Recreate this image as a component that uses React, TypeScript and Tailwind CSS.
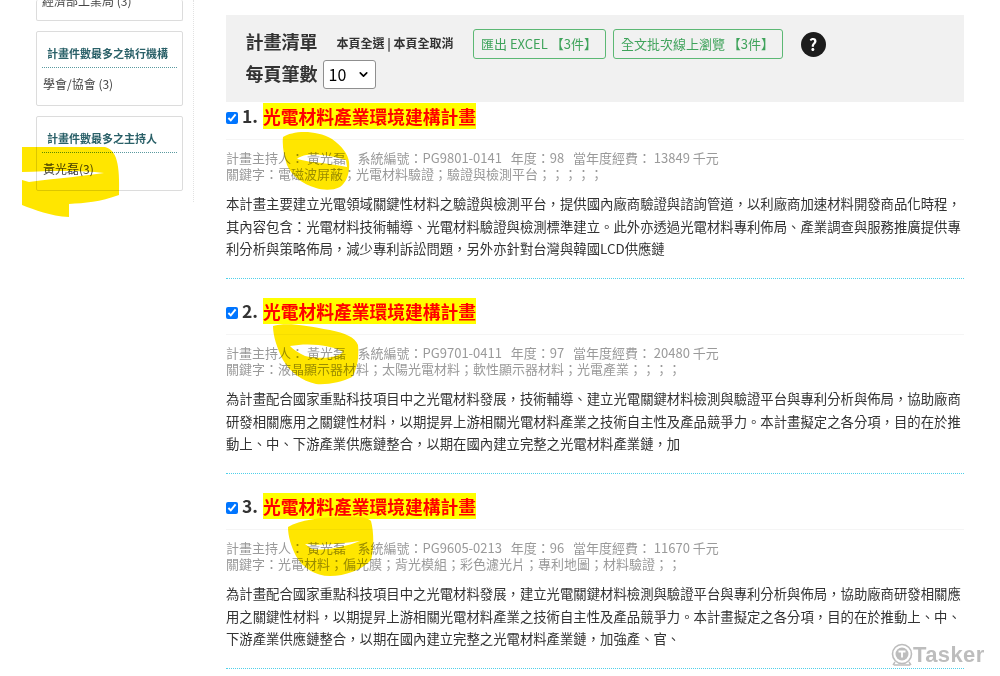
import { ChevronDown } from 'lucide-react';

const font = { fontFamily: '"Noto Sans CJK TC", "Noto Sans", sans-serif' };

interface Project {
  no: number;
  code: string;
  year: string;
  budget: string;
  keywords: string;
  lines: string[];
}

const projects: Project[] = [
  {
    no: 1,
    code: 'PG9801-0141',
    year: '98',
    budget: '13849',
    keywords: '電磁波屏蔽；光電材料驗證；驗證與檢測平台；；；；；',
    lines: [
      '本計畫主要建立光電領域關鍵性材料之驗證與檢測平台，提供國內廠商驗證與諮詢管道，以利廠商加速材料開發商品化時程，',
      '其內容包含：光電材料技術輔導、光電材料驗證與檢測標準建立。此外亦透過光電材料專利佈局、產業調查與服務推廣提供專',
      '利分析與策略佈局，減少專利訴訟問題，另外亦針對台灣與韓國LCD供應鏈',
    ],
  },
  {
    no: 2,
    code: 'PG9701-0411',
    year: '97',
    budget: '20480',
    keywords: '液晶顯示器材料；太陽光電材料；軟性顯示器材料；光電產業；；；；',
    lines: [
      '為計畫配合國家重點科技項目中之光電材料發展，技術輔導、建立光電關鍵材料檢測與驗證平台與專利分析與佈局，協助廠商',
      '研發相關應用之關鍵性材料，以期提昇上游相關光電材料產業之技術自主性及產品競爭力。本計畫擬定之各分項，目的在於推',
      '動上、中、下游產業供應鏈整合，以期在國內建立完整之光電材料產業鏈，加',
    ],
  },
  {
    no: 3,
    code: 'PG9605-0213',
    year: '96',
    budget: '11670',
    keywords: '光電材料；偏光膜；背光模組；彩色濾光片；專利地圖；材料驗證；；',
    lines: [
      '為計畫配合國家重點科技項目中之光電材料發展，建立光電關鍵材料檢測與驗證平台與專利分析與佈局，協助廠商研發相關應',
      '用之關鍵性材料，以期提昇上游相關光電材料產業之技術自主性及產品競爭力。本計畫擬定之各分項，目的在於推動上、中、',
      '下游產業供應鏈整合，以期在國內建立完整之光電材料產業鏈，加強產、官、',
    ],
  },
];

// highlighter marks: outer stroke then the hollow left inside it
const scribbles = [
  'M283 137 C292 131 315 129 332 139 C342 146 348 154 349 162 C350 172 347 182 340 187 C332 191 322 190 316 188 C302 184 292 176 287 165 C284 156 282 146 283 137 Z M297 159 C305 152 325 154 346 160 L347 167 C330 163 312 163 297 159 Z',
  'M273 326 C285 322 305 325 330 330 C345 333 355 337 358 345 C359 355 358 368 352 377 C342 382 328 385 316 384 C302 381 290 372 283 360 C277 348 273 336 273 326 Z M290 346 C310 342 335 346 343 352 C335 360 315 358 305 356 C298 353 293 349 290 346 Z',
  'M288 527 C300 520 320 517 345 517 C358 516 368 517 371 521 C374 532 374 550 371 560 C362 570 345 576 330 576 C315 576 303 568 296 556 C291 546 288 536 288 527 Z M305 544 C325 546 345 543 360 541 C345 547 325 551 312 549 Z',
];

function SideCard({ title, item, cut }: { title: string; item: string; cut?: boolean }) {
  return (
    <div className={`border border-[#dcdcdc] rounded-[2px] px-[5px] ${cut ? 'h-[21px] border-t-0 overflow-hidden' : 'h-[75px] pt-[13px]'}`}>
      {cut ? (
        <div className="text-[12px] leading-[16px] -mt-[7px] text-[#444]">{item}</div>
      ) : (
        <>
          <div className="text-[11px] leading-[16px] font-bold text-[#2a6068] pl-[5px] pb-[6px] border-b border-dotted border-[#5a9aa0]">{title}</div>
          <div className="text-[12px] leading-[16px] text-[#444] mt-[8px] pl-[1px]">{item}</div>
        </>
      )}
    </div>
  );
}

function ProjectItem({ p }: { p: Project }) {
  return (
    <div className="h-[177px] mb-[18px] border-b border-dotted border-[#4fd0ea]">
      <div className="h-[38px] flex items-start pt-[1px] border-b border-[#f5f5f5]">
        <input type="checkbox" defaultChecked className="mt-[9px] w-[12px] h-[12px] accent-[#0075ff]" readOnly />
        <span className="ml-[4px] text-[17.5px] leading-[26px] font-bold text-[#333]">{p.no}.</span>
        <span className="ml-[5px] bg-[#ffff00] text-[#ff0000] font-bold text-[17.75px] leading-[26px]">光電材料產業環境建構計畫</span>
      </div>
      <div className="mt-[10px] text-[13px] leading-[16px] text-[#9a9a9a]">
        <div className="whitespace-pre">{`計畫主持人： 黃光磊    系統編號：PG${p.code.slice(2)}   年度：${p.year}   當年度經費： ${p.budget} 千元`}</div>
        <div>關鍵字：{p.keywords}</div>
      </div>
      <div className="mt-[10px] text-[13.37px] leading-[22.5px] text-[#333]">
        {p.lines.map((l) => (
          <div key={l} className="whitespace-nowrap">{l}</div>
        ))}
      </div>
    </div>
  );
}

export default function App() {
  return (
    <div className="relative w-[1000px] h-[676px] overflow-hidden bg-white" style={font}>
      <div className="flex h-full">
        {/* Sidebar */}
        <aside className="w-[194px] h-[202px] pl-[36px] pr-[10px] border-r border-dotted border-[#e2e2e2] flex flex-col gap-[10px]">
          <SideCard cut title="" item="經濟部工業局 (3)" />
          <SideCard title="計畫件數最多之執行機構" item="學會/協會 (3)" />
          <SideCard title="計畫件數最多之主持人" item="黃光磊(3)" />
        </aside>

        {/* Main */}
        <main className="ml-[32px] w-[738px] pt-[15px]">
          <div className="h-[87px] bg-[#f1f1f1] pl-[19.5px] pt-[14px]">
            <div className="flex items-center h-[30px]">
              <span className="-mt-[6px] text-[18px] font-bold text-[#333]">計畫清單</span>
              <span className="-mt-[2px] ml-[19px] text-[12px] font-bold text-[#333]">本頁全選 | 本頁全取消</span>
              <button className="ml-[19px] w-[133px] h-[30px] border border-[#5cb874] rounded-[3px] text-[13px] text-[#3fa35b]">匯出 EXCEL 【3件】</button>
              <button className="ml-[7px] w-[170px] h-[30px] border border-[#5cb874] rounded-[3px] text-[13px] text-[#3fa35b]">全文批次線上瀏覽 【3件】</button>
              <span className="ml-[18px] w-[25px] h-[25px] rounded-full bg-[#1c1c1c] text-white text-[16px] font-bold flex items-center justify-center">?</span>
            </div>
            <div className="flex items-center h-[30px]">
              <span className="-mt-[2px] text-[18px] font-bold text-[#333]">每頁筆數</span>
              <span className="ml-[5px] w-[53px] h-[29px] bg-white border border-[#8f8f8f] rounded-[3px] flex items-center pl-[5px] text-[16px] text-black">
                10
                <ChevronDown className="ml-[11px] w-[13px] h-[13px]" strokeWidth={3} />
              </span>
            </div>
          </div>
          {projects.map((p) => (
            <ProjectItem key={p.no} p={p} />
          ))}
        </main>
      </div>

      {/* Highlighter scribbles over the page */}
      <svg className="absolute inset-0 pointer-events-none mix-blend-multiply" width={1000} height={676}>
        <path d="M22 147 L105 147 C117 150 120 165 119 195 C100 202 85 203 69 204 L69 217 C50 216 35 210 22 205 L22 180 L29 182 C60 178 85 176 104 173 C80 170 50 171 22 172 Z" fill="#ffe600" />
        {scribbles.map((d) => (
          <path key={d} d={d} fill="#ffe600" fillRule="evenodd" />
        ))}
      </svg>

      {/* Tasker watermark */}
      <div className="absolute left-[891px] top-[643px] flex items-center">
        <svg width="22" height="24" viewBox="0 0 22 24" fill="none" stroke="#bdbdbd">
          <circle cx="11" cy="11" r="9.5" strokeWidth="1.6" />
          <circle cx="11" cy="11" r="6.5" fill="#bdbdbd" stroke="none" />
          <path d="M7.5 8.5h7M11 8.5v6" stroke="#fff" strokeWidth="1.8" />
          <path d="M4 19l-2 3M18 19l2 3M3 22h16" strokeWidth="1.4" />
        </svg>
        <span className="text-[22px] leading-[24px] font-bold text-[#bdbdbd] tracking-[0.4px]" style={{ fontFamily: '"Liberation Sans", sans-serif' }}>Tasker</span>
      </div>
    </div>
  );
}
